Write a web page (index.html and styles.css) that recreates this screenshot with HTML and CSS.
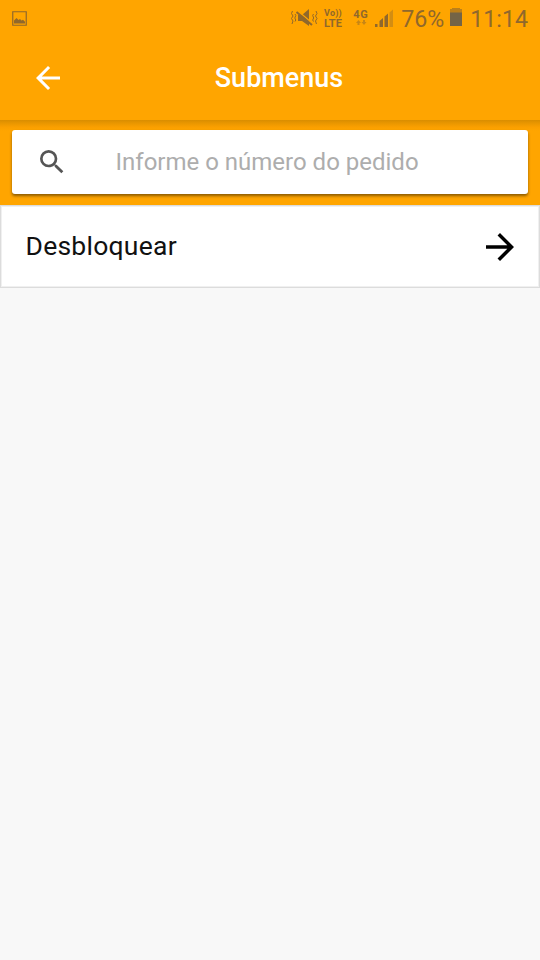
FILE: index.html
```
<!DOCTYPE html>
<html lang="pt-BR">
<head>
<meta charset="utf-8">
<title>Submenus</title>
<link rel="stylesheet" href="styles.css">
</head>
<body>
<header class="header">
  <div class="status">
    <svg class="picture" width="15" height="15" viewBox="0 0 15 15"><path d="M.75.75h13.5v13.5H.75z" fill="none" stroke="currentColor" stroke-width="1.2"/><path d="M2 12.500V9.500l2.500-2.500 2 2 1.500-1 1.500 1.500 1.500-.800 2 2v1.800z" fill="currentColor"/></svg>
    <svg class="mute" width="28" height="20" viewBox="0 0 28 20"><path d="M2.500 3L1.500 5.500l1.500 2.500-1.500 2.500L3 13l-1 3M5 6l.8 1.500L4.800 10l1 2L5 13.500M26 3l1 2.500L25.500 8l1.500 2.500-1.500 2.500 1 3M23.500 6l-.8 1.500 1 2.500-1 2 .8 1.500" fill="none" stroke="currentColor" stroke-width="1"/><path d="M8 7h4l7-6v17l-7-5H8z" fill="currentColor"/><path d="M8 3l14 12" stroke="#ffa500" stroke-width="1.500"/><path d="M6.500 4L22 17" stroke="currentColor" stroke-width="2"/></svg>
    <div class="volte"><span class="vo">Vo))</span><span class="lte">LTE</span></div>
    <div class="network"><span>4G</span><svg width="12" height="6" viewBox="0 0 12 6"><path d="M3.500 0L6 3H4.500v2h-2V3H1zM8 0h2v2h1.500L9 5 6.500 2H8z" fill="currentColor"/></svg></div>
    <svg class="signal" width="19" height="18" viewBox="0 0 19 18"><path d="M0 15h2.500v3H0zM4.500 12l3.500-3v9H4.500zM9.500 7.500l3.500-3V18H9.500z" fill="currentColor"/><path d="M14.500 3.500L18 .500V18h-3.500z" fill="currentColor" opacity=".4"/></svg>
    <span class="percent">76%</span>
    <svg class="battery" width="12" height="18" viewBox="0 0 12 18"><path d="M2 0h8v1h2v4H0V1h2z" fill="currentColor" opacity=".6"/><path d="M0 4.500h12V18H0z" fill="#746446"/></svg>
    <time class="clock">11:14</time>
  </div>
  <div class="toolbar">
    <svg class="back" width="36" height="36" viewBox="0 0 24 24"><path d="M20 11H7.830l5.590-5.590L12 4l-8 8 8 8 1.410-1.410L7.830 13H20z" fill="#fff"/></svg>
    <h1 class="title">Submenus</h1>
  </div>
</header>
<main>
  <section class="search-area">
    <label class="search">
      <svg class="search-icon" width="32" height="32" viewBox="0 0 24 24"><path d="M15.500 14h-.790l-.280-.270A6.470 6.470 0 0 0 16 9.500 6.500 6.500 0 1 0 9.500 16c1.610 0 3.090-.590 4.230-1.570l.270.280v.790l5 4.990L20.490 19zm-6 0a4.500 4.500 0 1 1 0-9 4.500 4.500 0 0 1 0 9z" fill="#555"/></svg>
      <input class="field" type="text" placeholder="Informe o número do pedido">
    </label>
  </section>
  <div class="row">
    <span class="label">Desbloquear</span>
    <svg width="42" height="42" viewBox="0 0 24 24"><path d="M12 4l-1.410 1.410L16.170 11H4v2h12.170l-5.580 5.590L12 20l8-8z" fill="#000"/></svg>
  </div>
</main>
</body>
</html>
```
FILE: styles.css
```
* { box-sizing: border-box; }
body {
  margin: 0;
  min-height: 960px;
  background: #f8f8f8;
  font-family: Roboto, "Liberation Sans", sans-serif;
}
.header {
  height: 120px;
  background: #ffa500;
}
.status {
  display: flex;
  align-items: center;
  height: 36px;
  padding: 0 12px;
  color: #90682c;
}
.status svg { flex: none; }
.mute { margin-left: 263px; }
.volte {
  display: flex;
  flex-direction: column;
  width: 20px;
  margin: 2px 0 0 6px;
  font-size: 9px;
  font-weight: 700;
}
.vo { line-height: 9px; letter-spacing: .2px; }
.lte { font-size: 11px; line-height: 11px; letter-spacing: .1px; }
.network {
  display: flex;
  flex-direction: column;
  align-items: center;
  width: 17px;
  margin: -2px 0 0 9px;
  font-size: 11px;
  font-weight: 700;
  line-height: 11px;
  letter-spacing: .7px;
}
.network svg { opacity: .5; }
.signal { margin-left: 6px; }
.percent {
  width: 43px;
  margin: 2px 0 0 7px;
  font-size: 23.200px;
  white-space: nowrap;
}
.battery { margin: -2px 0 0 6px; }
.clock {
  margin: 2px 0 0 8px;
  font-size: 23.200px;
}
.toolbar {
  display: flex;
  align-items: center;
  height: 84px;
  padding: 0 30px;
}
.title {
  flex: 1;
  margin: 0 48px 0 12px;
  padding-left: 18px;
  color: #fff;
  font-size: 27px;
  font-weight: 500;
  text-align: center;
}
.search-area {
  height: 85px;
  padding: 10px 12px 0;
  background: linear-gradient(#d98d00, #e89600 3px, #fa9f00 7px, #ffa500 11px);
}
.search {
  display: flex;
  align-items: center;
  height: 63.500px;
  padding-left: 23.500px;
  background: #fff;
  border-radius: 3px;
  box-shadow: 0 2px 3px rgba(0, 0, 0, .45);
}
.field {
  flex: 1;
  margin-left: 48px;
  padding: 0;
  border: 0;
  outline: 0;
  background: transparent;
  font: 24px Roboto, "Liberation Sans", sans-serif;
}
.field::placeholder { color: #adadad; }
.row {
  display: flex;
  align-items: center;
  justify-content: space-between;
  height: 83px;
  padding: 0 18px 0 24.500px;
  background: #fff;
  border: 1px solid #dcdcdc;
  box-shadow: inset 0 0 0 1px #f0f0f0;
}
.label {
  color: #111;
  font-size: 26.500px;
  line-height: 30px;
  margin-bottom: 2px;
  letter-spacing: .250px;
}
```
